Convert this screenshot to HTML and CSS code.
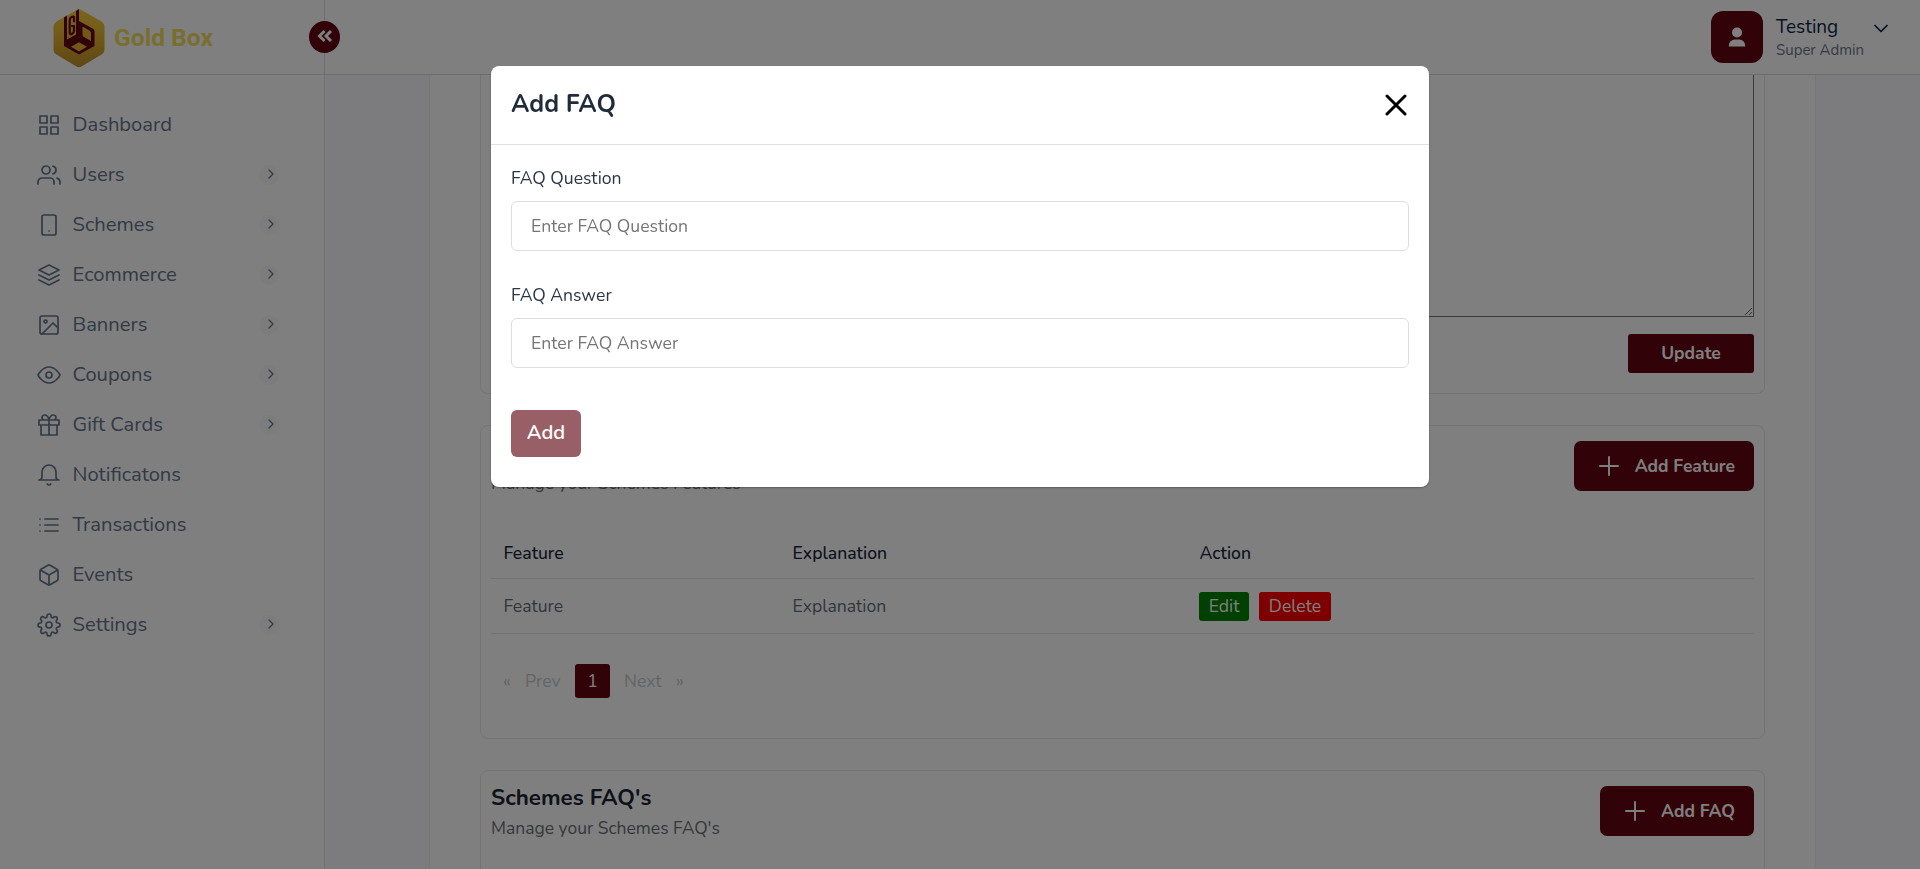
FILE: index.html
```html
<!DOCTYPE html>
<html lang="en">
<head>
<meta charset="utf-8">
<title>Gold Box</title>
<link rel="stylesheet" href="styles.css">
</head>
<body>
<svg class="sprite" aria-hidden="true">
  <symbol id="chev" viewBox="0 0 10 10"><path d="M3 1l4 4-4 4"/></symbol>
  <symbol id="plus" viewBox="0 0 24 24"><path d="M12 1.200v21.600M1.200 12h21.600"/></symbol>
</svg>
<div class="app">
  <header class="topbar">
    <div class="brand">
      <svg class="brand-logo" width="52" height="60" viewBox="0 0 52 60">
        <defs><linearGradient id="gold" x1="0" y1="0" x2="0" y2="1"><stop offset="0" stop-color="#f6cb3a"/><stop offset=".5" stop-color="#e2b030"/><stop offset="1" stop-color="#bb8f28"/></linearGradient></defs>
        <path fill="url(#gold)" d="M23.500 2q2.500-1.600 5 0l20 11.500q3 2 3 5v22.500q0 4-3 5.500l-20 12q-2.500 1.500-5 0l-20-12q-3-1.500-3-5.500V18.500q0-3 3-5z"/>
        <path fill="#640512" d="M11 9.500l3-2v24l9-5V3l3-2v12l13.500 7.500q2 1 2 3V38L26 46.500 11 38z"/>
        <path fill="#e2b030" d="M29.500 18.500l7 4q1.500 1 1.500 2.500v8l-7-4q-1.500-1-1.500-2.500zM26 34.200l8 4.600-8 4.600-8-4.600z"/>
        <path fill="none" stroke="#640512" stroke-width="2.200" d="M21 13.500V9.800q0-2-2.300-.8-2 1-2 3V24.500q0 2.500 2.300 1.300 2-1 2-3V18h-2"/>
      </svg>
      <span class="brand-name">Gold Box</span>
      <button class="collapse" aria-label="Collapse"><svg width="16" height="14" viewBox="0 0 16 14"><path d="M7.500 2L2.500 7l5 5M14 2L9 7l5 5"/></svg></button>
    </div>
    <div class="profile">
      <div class="avatar"><svg width="18" height="20" viewBox="0 0 18 20"><circle cx="9" cy="5.500" r="5"/><path d="M.8 19.500V18.500a6 6 0 0 1 6-6h4.400a6 6 0 0 1 6 6v1z"/></svg></div>
      <div class="who"><div class="who-name">Testing</div><div class="who-role">Super Admin</div></div>
      <svg class="caret" width="14" height="9" viewBox="0 0 14 9"><path d="M1 1.500l6 6 6-6"/></svg>
    </div>
  </header>
  <div class="body">
    <nav class="sidebar">
      <a class="item"><svg viewBox="0 0 24 24"><path d="M3 3h7v7H3zM14 3h7v7h-7zM14 14h7v7h-7zM3 14h7v7H3z"/></svg><span>Dashboard</span></a>
      <a class="item"><svg viewBox="0 0 24 24"><path d="M17 21v-2a4 4 0 0 0-4-4H5a4 4 0 0 0-4 4v2"/><circle cx="9" cy="7" r="4"/><path d="M23 21v-2a4 4 0 0 0-3-3.870M16 3.130a4 4 0 0 1 0 7.750"/></svg><span>Users</span><i class="more"><svg><use href="#chev"/></svg></i></a>
      <a class="item"><svg viewBox="0 0 24 24"><rect x="5" y="2" width="14" height="20" rx="2"/><path d="M12 18h.01"/></svg><span>Schemes</span><i class="more"><svg><use href="#chev"/></svg></i></a>
      <a class="item"><svg viewBox="0 0 24 24"><path d="M12 2L2 7l10 5 10-5zM2 17l10 5 10-5M2 12l10 5 10-5"/></svg><span>Ecommerce</span><i class="more"><svg><use href="#chev"/></svg></i></a>
      <a class="item"><svg viewBox="0 0 24 24"><rect x="3" y="3" width="18" height="18" rx="2"/><circle cx="8.500" cy="8.500" r="1.500"/><path d="M21 15l-5-5L5 21"/></svg><span>Banners</span><i class="more"><svg><use href="#chev"/></svg></i></a>
      <a class="item"><svg viewBox="0 0 24 24"><path d="M1 12s4-8 11-8 11 8 11 8-4 8-11 8-11-8-11-8z"/><circle cx="12" cy="12" r="3"/></svg><span>Coupons</span><i class="more"><svg><use href="#chev"/></svg></i></a>
      <a class="item"><svg viewBox="0 0 24 24"><path d="M20 12v10H4V12M2 7h20v5H2zM12 22V7M12 7H7.500a2.500 2.500 0 0 1 0-5C11 2 12 7 12 7zM12 7h4.500a2.500 2.500 0 0 0 0-5C13 2 12 7 12 7z"/></svg><span>Gift Cards</span><i class="more"><svg><use href="#chev"/></svg></i></a>
      <a class="item"><svg viewBox="0 0 24 24"><path d="M22 17H2a3 3 0 0 0 3-3V9a7 7 0 0 1 14 0v5a3 3 0 0 0 3 3zM13.730 21a2 2 0 0 1-3.460 0"/></svg><span>Notificatons</span></a>
      <a class="item"><svg viewBox="0 0 24 24"><path d="M8 6h13M8 12h13M8 18h13M3 6h.01M3 12h.01M3 18h.01"/></svg><span>Transactions</span></a>
      <a class="item"><svg viewBox="0 0 24 24"><path d="M21 16V8a2 2 0 0 0-1-1.730l-7-4a2 2 0 0 0-2 0l-7 4A2 2 0 0 0 3 8v8a2 2 0 0 0 1 1.730l7 4a2 2 0 0 0 2 0l7-4A2 2 0 0 0 21 16zM3.270 6.960L12 12.010l8.730-5.050M12 22.080V12"/></svg><span>Events</span></a>
      <a class="item"><svg viewBox="0 0 24 24"><circle cx="12" cy="12" r="3"/><path d="M19.400 15a1.650 1.650 0 0 0 .33 1.820l.06.06a2 2 0 0 1 0 2.830 2 2 0 0 1-2.830 0l-.06-.06a1.650 1.650 0 0 0-1.820-.33 1.650 1.650 0 0 0-1 1.510V21a2 2 0 0 1-2 2 2 2 0 0 1-2-2v-.09A1.650 1.650 0 0 0 9 19.400a1.650 1.650 0 0 0-1.820.33l-.06.06a2 2 0 0 1-2.830 0 2 2 0 0 1 0-2.830l.06-.06a1.650 1.650 0 0 0 .33-1.820 1.650 1.650 0 0 0-1.510-1H3a2 2 0 0 1-2-2 2 2 0 0 1 2-2h.09A1.650 1.650 0 0 0 4.600 9a1.650 1.650 0 0 0-.33-1.820l-.06-.06a2 2 0 0 1 0-2.830 2 2 0 0 1 2.830 0l.06.06a1.650 1.650 0 0 0 1.820.33H9a1.650 1.650 0 0 0 1-1.510V3a2 2 0 0 1 2-2 2 2 0 0 1 2 2v.09a1.650 1.650 0 0 0 1 1.510 1.650 1.650 0 0 0 1.820-.33l.06-.06a2 2 0 0 1 2.830 0 2 2 0 0 1 0 2.830l-.06.06a1.650 1.650 0 0 0-.33 1.820V9a1.650 1.650 0 0 0 1.510 1H21a2 2 0 0 1 2 2 2 2 0 0 1-2 2h-.09a1.650 1.650 0 0 0-1.510 1z"/></svg><span>Settings</span><i class="more"><svg><use href="#chev"/></svg></i></a>
    </nav>
    <main class="stage">
      <div class="page">
        <section class="card card-edit">
          <textarea class="editor" aria-label="Description"></textarea>
          <button class="btn btn-update">Update</button>
        </section>
        <section class="card card-features">
          <div class="card-head">
            <div><h2 class="card-title">Schemes Features</h2><p class="card-sub">Manage your Schemes Features</p></div>
            <button class="btn btn-add"><svg><use href="#plus"/></svg>Add Feature</button>
          </div>
          <div class="row row-head"><span>Feature</span><span>Explanation</span><span>Action</span></div>
          <div class="row"><span>Feature</span><span>Explanation</span><span class="actions"><b class="tag tag-edit">Edit</b><b class="tag tag-delete">Delete</b></span></div>
          <div class="pager"><span class="arrow">«</span><span class="prev">Prev</span><b class="current">1</b><span class="next">Next</span><span class="arrow">»</span></div>
        </section>
        <section class="card card-faq">
          <div class="card-head">
            <div><h2 class="card-title">Schemes FAQ's</h2><p class="card-sub">Manage your Schemes FAQ's</p></div>
            <button class="btn btn-add"><svg><use href="#plus"/></svg>Add FAQ</button>
          </div>
        </section>
      </div>
    </main>
  </div>
</div>
<div class="overlay">
  <div class="modal" role="dialog">
    <div class="modal-head"><h1 class="modal-title">Add FAQ</h1><svg class="close" width="22" height="22" viewBox="0 0 22 22"><path d="M2 2l18 18M20 2L2 20"/></svg></div>
    <form class="modal-body">
      <label class="label">FAQ Question</label>
      <input class="input" placeholder="Enter FAQ Question">
      <label class="label">FAQ Answer</label>
      <input class="input" placeholder="Enter FAQ Answer">
      <button class="submit" type="button">Add</button>
    </form>
  </div>
</div>
</body>
</html>
```
FILE: styles.css
```css
* { box-sizing: border-box; }
body { margin: 0; height: 869px; overflow: hidden; font-family: Nunito, Lato, "Open Sans", sans-serif; font-size: 17.6px; color: #1e293b; background: #fff; }
h1, h2, p { margin: 0; }
button, input { font-family: inherit; }
.sprite { display: none; }
svg { fill: none; stroke: currentColor; stroke-linecap: round; stroke-linejoin: round; flex: none; }
.app { height: 869px; display: flex; flex-direction: column; overflow: hidden; }

.topbar { height: 75px; flex: none; display: flex; justify-content: space-between; border-bottom: 1px solid #dbdbdf; }
.brand { position: relative; width: 325px; padding-left: 53px; display: flex; align-items: center; border-right: 1px solid #dcdce0; }
.brand-logo { stroke: none; margin-top: 2px; }
.brand-name { margin-left: 9px; font: 700 24.6px/30px Roboto, sans-serif; color: #f0dc5c; margin-top: 2px; }
.collapse { position: absolute; right: -16px; top: 21px; width: 31px; height: 32px; border: 0; border-radius: 50%; padding: 0; background: #640512; color: #fff; display: flex; align-items: center; justify-content: center; }
.collapse svg { stroke-width: 3; stroke-linecap: butt; stroke-linejoin: miter; margin-top: -2px; }
.profile { display: flex; align-items: flex-start; padding: 11px 32px 0 0; }
.avatar { width: 52px; height: 52px; border-radius: 12px; background: #640512; display: flex; align-items: center; justify-content: center; }
.avatar svg { fill: #fff; stroke: none; }
.who { width: 98px; margin-left: 13px; white-space: nowrap; }
.who-name { font-size: 19px; line-height: 22px; margin-top: 5px; color: #101f48; }
.who-role { font-size: 15px; line-height: 20px; margin-top: 2px; color: #6b7788; }
.caret { margin-top: 13px; color: #101f48; stroke-width: 1.700; }

.body { flex: 1; display: flex; min-height: 0; }
.sidebar { width: 325px; flex: none; padding: 24px 45px 0 37px; border-right: 1px solid #e4e4ea; }
.item { display: flex; align-items: center; height: 50px; gap: 11.5px; font-size: 20.2px; line-height: 24px; color: #64748b; }
.item > span { padding-top: 2px; }
.item > svg { width: 24px; height: 24px; margin-top: 1px; stroke-width: 1.700; }
.more { width: 20px; height: 20px; margin: 2px 0 0 auto; border-radius: 50%; background: #f8f8fa; display: flex; align-items: center; justify-content: center; }
.more svg { width: 10px; height: 10px; margin: -2px 0 0 4px; stroke-width: 1.300; }

.stage { flex: 1; background: #f8f8fe; padding: 0 104px; overflow: hidden; }
.page { height: 100%; background: #fff; border: solid #ececf2; border-width: 0 1px; padding: 0 50px; }
.card { border: 1px solid #e8e8eb; border-radius: 8px; padding: 15px 10px 0; }
.card-edit { height: 319px; margin-bottom: 31px; border-top: 0; border-radius: 0 0 8px 8px; padding-top: 0; display: flex; flex-direction: column; align-items: flex-end; }
.editor { width: 100%; height: 242px; border: 1px solid #767676; border-top: 0; resize: both; padding: 0; }
.btn { border: 0; background: #640512; color: #fff; font-weight: 700; font-size: 17.500px; }
.btn-update { width: 126px; height: 39px; margin-top: 17px; padding-bottom: 2px; border-radius: 3px; }
.card-features { height: 314px; margin-bottom: 31px; }
.card-faq { height: 314px; }
.card-head { display: flex; justify-content: space-between; align-items: flex-start; height: 60px; }
.card-title { font-size: 22.400px; line-height: 28px; font-weight: 700; margin-top: -2px; color: #1b2535; }
.card-sub { font-size: 17.500px; line-height: 24px; margin-top: 4px; color: #6b7074; }
.btn-add { height: 50px; padding: 0 19px 0 25px; border-radius: 7px; display: flex; align-items: center; gap: 15.500px; }
.btn-add svg { width: 20px; height: 20px; stroke-width: 2.300; overflow: visible; }
.row { display: grid; grid-template-columns: 289px 407px 1fr; align-items: center; height: 55px; padding: 0 12px 0 12.500px; border-bottom: 1px solid #e6e6e9; color: #5f6e78; }
.row-head { height: 52px; margin-top: 26px; padding-top: 1px; color: #16243a; font-weight: 500; }
.actions { display: flex; gap: 10px; margin-left: -.5px; }
.tag { height: 29px; padding: 0 9px; border-radius: 3px; color: #fff; font-weight: 400; line-height: 29px; text-align: center; }
.tag-edit { width: 50px; background: #008000; }
.tag-delete { width: 72px; background: #f00; }
.pager { display: flex; align-items: center; height: 34px; margin: 30px 0 0 12px; color: #c9c9c9; }
.pager .arrow { width: 22px; }
.prev { width: 50px; }
.current { width: 35px; height: 34px; border-radius: 3px; background: #640512; color: #fff; font-weight: 400; line-height: 34px; text-align: center; }
.next { width: 52px; margin-left: 14px; }

.overlay { position: fixed; inset: 0; background: rgba(0, 0, 0, .5); display: flex; align-items: flex-start; justify-content: center; }
.modal { width: 938px; height: 421px; margin-top: 66px; background: #fff; border-radius: 8px; box-shadow: 0 1px 2px rgba(0, 0, 0, .3); }
.modal-head { height: 79px; padding: 0 22.500px 0 20px; display: flex; align-items: center; justify-content: space-between; border-bottom: 1px solid #dfe1e8; }
.modal-title { font-size: 24.800px; line-height: 30px; font-weight: 700; margin-top: -2px; color: #1f2b3a; }
.close { stroke: #000; stroke-width: 3; margin-top: 0; }
.modal-body { padding: 21px 20px 0; display: flex; flex-direction: column; align-items: flex-start; }
.label { line-height: 24px; color: #2a3644; }
.input { width: 100%; height: 50px; margin: 11px 0 32px; padding: 0 19px; border: 1px solid #dcdee4; border-radius: 6px; font-size: 17.600px; outline: 0; }
.input::placeholder { color: #757575; opacity: 1; }
.submit { width: 70px; height: 47px; margin-top: 10px; border: 0; border-radius: 6px; background: #985f66; color: #fff; font-size: 20px; font-weight: 600; padding: 0 0 3px; }
```
